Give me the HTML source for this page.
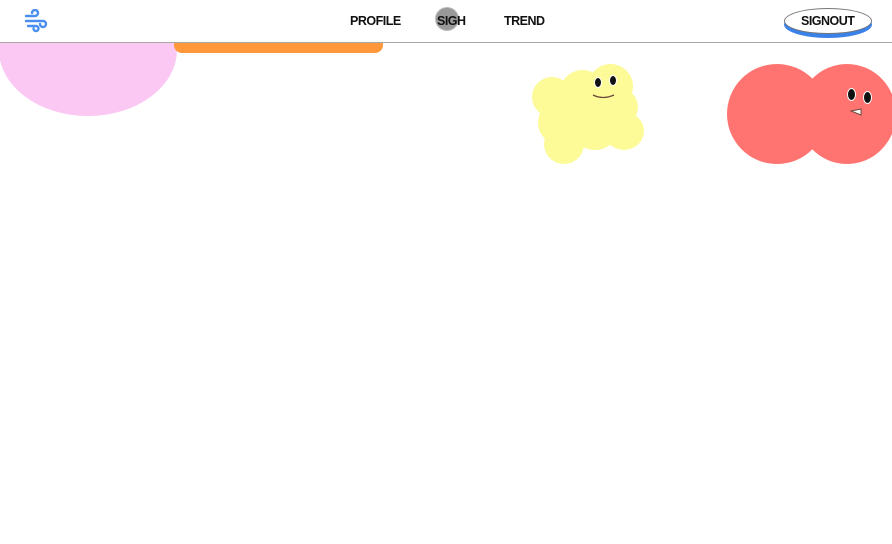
<!DOCTYPE html>
<html><head><style>
body{margin:0;width:892px;height:544px;overflow:hidden;background:#fff;font-family:"Liberation Sans",sans-serif;position:relative}
.hdr{position:absolute;left:0;top:0;width:892px;height:42px;border-bottom:1.5px solid #a8a8a8;background:#fff;z-index:5}
.nav{position:absolute;top:14px;font-size:12.5px;font-weight:bold;color:#111;letter-spacing:-0.5px}
.c{position:absolute;border-radius:50%}
</style></head><body>
<div class="c" style="left:-1px;top:-16px;width:178px;height:132px;background:#fbc8f3"></div>
<div style="position:absolute;left:174px;top:36px;width:209px;height:17px;background:#ff983a;border-radius:0 0 8px 8px"></div>
<div class="hdr">
<svg style="position:absolute;left:24px;top:9px" width="24" height="24" viewBox="0 0 24 24" fill="none" stroke="#4a8ff0" stroke-width="2.4" stroke-linecap="round"><path d="M2 7h9a3 3 0 1 0-3-3"/><path d="M2 12h17a3 3 0 1 1-3 3"/><path d="M4 17h8a2.5 2.5 0 1 1-2.5 2.5"/></svg>
<div class="nav" style="left:350px">PROFILE</div>
<div class="c" style="left:435px;top:7px;width:22px;height:22px;background:#999;border:1px solid #bbb"></div>
<div class="nav" style="left:437px">SIGH</div>
<div class="nav" style="left:504px">TREND</div>
<div class="c" style="left:784px;top:11px;width:88px;height:27px;background:#3b82e8"></div>
<div class="c" style="left:784px;top:8px;width:86px;height:24px;background:#fff;border:1px solid #777"></div>
<div class="nav" style="left:801px">SIGNOUT</div>
</div>
<div style="position:absolute;left:530px;top:60px;width:120px;height:110px">
<div class="c" style="left:2px;top:17px;width:40px;height:40px;background:#fdfa98"></div>
<div class="c" style="left:30px;top:10px;width:45px;height:45px;background:#fdfa98"></div>
<div class="c" style="left:58px;top:4px;width:45px;height:45px;background:#fdfa98"></div>
<div class="c" style="left:70px;top:28px;width:38px;height:38px;background:#fdfa98"></div>
<div class="c" style="left:8px;top:40px;width:45px;height:45px;background:#fdfa98"></div>
<div class="c" style="left:40px;top:40px;width:50px;height:50px;background:#fdfa98"></div>
<div class="c" style="left:74px;top:52px;width:40px;height:38px;background:#fdfa98"></div>
<div class="c" style="left:14px;top:64px;width:40px;height:40px;background:#fdfa98"></div>
<div class="c" style="left:28px;top:30px;width:60px;height:50px;background:#fdfa98"></div>
<div class="c" style="left:64px;top:17px;width:6px;height:9px;background:#111;border:1px solid #fff"></div>
<div class="c" style="left:79px;top:15px;width:6px;height:9px;background:#111;border:1px solid #fff"></div>
<svg style="position:absolute;left:62px;top:33px" width="24" height="8"><path d="M1 2Q11 7 22 2" stroke="#6a4a3a" stroke-width="1.3" fill="none"/></svg>
</div>
<div class="c" style="left:727px;top:64px;width:100px;height:100px;background:#ff7470"></div>
<div class="c" style="left:798px;top:64px;width:98px;height:100px;background:#ff7470"></div>
<div class="c" style="left:847px;top:88px;width:7px;height:11px;background:#111;border:1.5px solid #fff"></div>
<div class="c" style="left:863px;top:91px;width:7px;height:11px;background:#111;border:1.5px solid #fff"></div>
<svg style="position:absolute;left:850px;top:108px" width="14" height="9"><path d="M1 3L11 1L11 7Z" fill="#fff" stroke="#6a4a3a" stroke-width="1"/></svg>
</body></html>
